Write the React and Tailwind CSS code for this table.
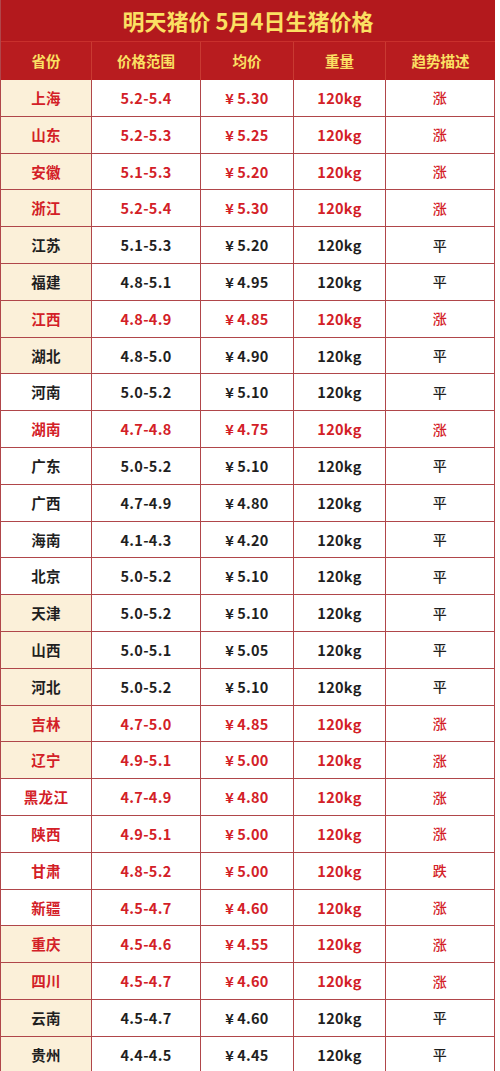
import React from "react";

const rows = [
  ["上海", "5.2-5.4", "5.30", "涨", true, true],
  ["山东", "5.2-5.3", "5.25", "涨", true, true],
  ["安徽", "5.1-5.3", "5.20", "涨", true, true],
  ["浙江", "5.2-5.4", "5.30", "涨", true, true],
  ["江苏", "5.1-5.3", "5.20", "平", false, true],
  ["福建", "4.8-5.1", "4.95", "平", false, true],
  ["江西", "4.8-4.9", "4.85", "涨", true, true],
  ["湖北", "4.8-5.0", "4.90", "平", false, true],
  ["河南", "5.0-5.2", "5.10", "平", false, false],
  ["湖南", "4.7-4.8", "4.75", "涨", true, false],
  ["广东", "5.0-5.2", "5.10", "平", false, false],
  ["广西", "4.7-4.9", "4.80", "平", false, false],
  ["海南", "4.1-4.3", "4.20", "平", false, false],
  ["北京", "5.0-5.2", "5.10", "平", false, false],
  ["天津", "5.0-5.2", "5.10", "平", false, true],
  ["山西", "5.0-5.1", "5.05", "平", false, true],
  ["河北", "5.0-5.2", "5.10", "平", false, true],
  ["吉林", "4.7-5.0", "4.85", "涨", true, true],
  ["辽宁", "4.9-5.1", "5.00", "涨", true, true],
  ["黑龙江", "4.7-4.9", "4.80", "涨", true, false],
  ["陕西", "4.9-5.1", "5.00", "涨", true, false],
  ["甘肃", "4.8-5.2", "5.00", "跌", true, false],
  ["新疆", "4.5-4.7", "4.60", "涨", true, false],
  ["重庆", "4.5-4.6", "4.55", "涨", true, true],
  ["四川", "4.5-4.7", "4.60", "涨", true, true],
  ["云南", "4.5-4.7", "4.60", "平", false, true],
  ["贵州", "4.4-4.5", "4.45", "平", false, true],
];

const font = { fontFamily: '"Noto Sans CJK SC", "Noto Sans", sans-serif' };

function HeadCell({ w, children, last }) {
  return (
    <div
      className={`${w} flex items-center justify-center ${last ? "" : "border-r border-[#c93a32]"} text-[14.5px] font-bold text-[#fbe063]`}
    >
      {children}
    </div>
  );
}

function Cell({ w, children, red, cream, trend }) {
  return (
    <div
      className={`${w} flex items-center justify-center border-r border-[#b0464a] ${cream ? "bg-[#fbf0d9]" : "bg-white"} ${red ? "text-[#d32027]" : "text-[#1f1f1f]"} ${trend ? "text-[14px] font-medium" : "text-[14.5px] font-bold"} tracking-[0.3px]`}
    >
      {children}
    </div>
  );
}

export default function App() {
  return (
    <div className="w-[500px] h-[1071px] overflow-hidden bg-white" style={font}>
      <div className="w-[495px] border-l border-[#b0464a]">
        <div className="h-[42px] bg-[#b3191d] flex items-center justify-center text-[22px] font-bold text-[#fbe063] border-b border-[#c9302c]">
          明天猪价 5月4日生猪价格
        </div>
        <div className="h-[38px] bg-[#b81c1f] flex">
          <HeadCell w="w-[91px]">省份</HeadCell>
          <HeadCell w="w-[109px]">价格范围</HeadCell>
          <HeadCell w="w-[93px]">均价</HeadCell>
          <HeadCell w="w-[92px]">重量</HeadCell>
          <HeadCell w="flex-1" last>趋势描述</HeadCell>
        </div>
        {rows.map(([prov, range, avg, trend, red, cream]) => (
          <div key={prov} className="h-[36.8px] flex border-b border-[#b0464a]">
            <Cell w="w-[91px]" red={red} cream={cream}>{prov}</Cell>
            <Cell w="w-[109px]" red={red}>{range}</Cell>
            <Cell w="w-[93px]" red={red}>
              <span className="mr-[3px]">¥</span>
              {avg}
            </Cell>
            <Cell w="w-[92px]" red={red}>120kg</Cell>
            <Cell w="flex-1" red={red} trend>{trend}</Cell>
          </div>
        ))}
      </div>
    </div>
  );
}
